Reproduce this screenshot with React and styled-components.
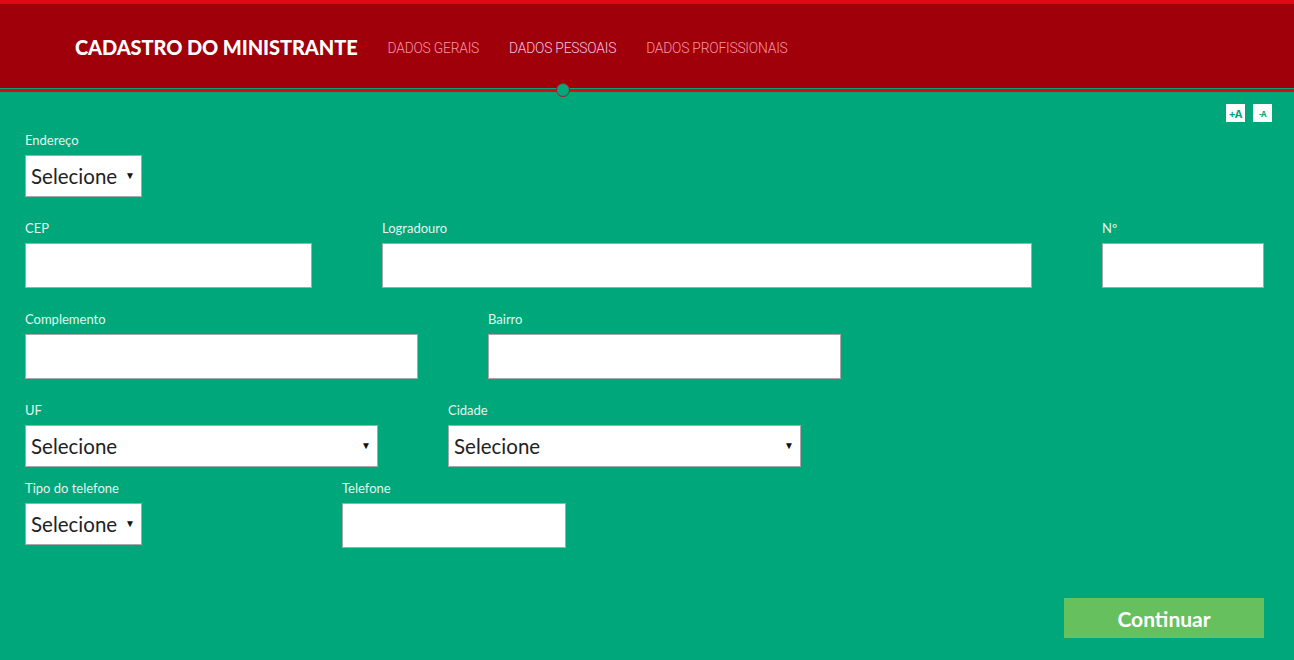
import React from "react";
import styled, { createGlobalStyle } from "styled-components";

const Global = createGlobalStyle`
  html, body { margin: 0; padding: 0; }
  body {
    background: #00a77a;
    font-family: Lato, "Open Sans", sans-serif;
    min-height: 100vh;
  }
  * { box-sizing: border-box; }
`;

const Header = styled.header`
  background: #a0000a;
  border-top: 4px solid #e30613;
  height: 88px;
  display: flex;
  align-items: stretch;
  padding-left: 75px;
  gap: 30px;
`;

const Title = styled.h1`
  margin: 0;
  align-self: center;
  margin-top: 1px;
  color: #fff;
  font-family: Lato, sans-serif;
  font-weight: 900;
  font-size: 20px;
  letter-spacing: -0.1px;
`;

const Nav = styled.nav`
  display: flex;
  gap: 30px;
  align-items: stretch;
`;

const NavItem = styled.a`
  position: relative;
  display: flex;
  align-items: center;
  padding-top: 4px;
  font-family: Roboto, sans-serif;
  font-weight: 300;
  font-size: 13.8px;
  letter-spacing: -0.2px;
  color: ${(p) => (p.$active ? "#f7c2e6" : "#f898a8")};
  text-decoration: none;
`;

const Dot = styled.span`
  position: absolute;
  left: 50%;
  bottom: -9px;
  width: 14px;
  height: 14px;
  margin-left: -7px;
  border-radius: 50%;
  background: #00a77a;
  border: 1px solid #c0101c;
  z-index: 2;
`;

const Rule = styled.div`
  height: 3px;
  margin-top: 1px;
  background: #e30613;
`;

const Main = styled.main`
  padding: 0 30px 0 25px;
`;

const SizeBar = styled.div`
  display: flex;
  justify-content: flex-end;
  gap: 8px;
  padding-top: 12px;
  margin-right: -8px;
`;

const SizeButton = styled.button`
  width: 19px;
  height: 18px;
  border: none;
  padding: 0;
  background: #fff;
  color: #00a77a;
  font-family: "Open Sans", sans-serif;
  font-weight: 700;
  font-size: ${(p) => p.$size}px;
  letter-spacing: -0.5px;
  display: flex;
  align-items: center;
  justify-content: center;
`;

const Row = styled.div`
  display: flex;
  gap: ${(p) => p.$gap}px;
  margin-top: ${(p) => p.$mt}px;
`;

const Field = styled.div`
  display: flex;
  flex-direction: column;
  width: ${(p) => p.$w}px;
`;

const Label = styled.label`
  color: #e4f4ed;
  font-size: 13px;
  line-height: 18px;
  height: 18px;
  margin-bottom: 6px;
`;

const Input = styled.input`
  width: 100%;
  height: 45px;
  border: 1px solid #a8a8a8;
  background: #fff;
  font-family: Lato, sans-serif;
  font-size: 18px;
  padding: 0 6px;
  outline: none;
`;

const SelectWrap = styled.div`
  position: relative;
  width: 100%;
  height: 42px;
`;

const Select = styled.select`
  appearance: none;
  -webkit-appearance: none;
  width: 100%;
  height: 100%;
  border: 1px solid #a8a8a8;
  border-radius: 0;
  background: #fff;
  color: #222;
  font-family: Lato, sans-serif;
  font-size: 20.5px;
  padding: 0 20px 0 5px;
  outline: none;
`;

const Caret = styled.span`
  position: absolute;
  right: 7px;
  top: 50%;
  transform: translateY(-58%);
  font-size: 10px;
  color: #111;
  pointer-events: none;
`;

const Footer = styled.div`
  display: flex;
  justify-content: flex-end;
  margin-top: 50px;
`;

const Continue = styled.button`
  width: 200px;
  height: 40px;
  border: none;
  background: #66c05e;
  color: #fff;
  font-family: Lato, sans-serif;
  font-weight: 700;
  font-size: 21px;
`;

function SelectField({ label, w }) {
  return (
    <Field $w={w}>
      <Label>{label}</Label>
      <SelectWrap>
        <Select defaultValue="">
          <option value="">Selecione</option>
        </Select>
        <Caret>▼</Caret>
      </SelectWrap>
    </Field>
  );
}

function TextField({ label, w }) {
  return (
    <Field $w={w}>
      <Label>{label}</Label>
      <Input type="text" />
    </Field>
  );
}

export default function App() {
  return (
    <>
      <Global />
      <Header>
        <Title>CADASTRO DO MINISTRANTE</Title>
        <Nav>
          <NavItem href="#">DADOS GERAIS</NavItem>
          <NavItem href="#" $active>
            DADOS PESSOAIS
            <Dot />
          </NavItem>
          <NavItem href="#">DADOS PROFISSIONAIS</NavItem>
        </Nav>
      </Header>
      <Rule />
      <Main>
        <SizeBar>
          <SizeButton $size={11}>+A</SizeButton>
          <SizeButton $size={8}>-A</SizeButton>
        </SizeBar>
        <Row $gap={0} $mt={9}>
          <SelectField label="Endereço" w={117} />
        </Row>
        <Row $gap={70} $mt={22}>
          <TextField label="CEP" w={287} />
          <TextField label="Logradouro" w={650} />
          <TextField label="Nº" w={162} />
        </Row>
        <Row $gap={70} $mt={22}>
          <TextField label="Complemento" w={393} />
          <TextField label="Bairro" w={353} />
        </Row>
        <Row $gap={70} $mt={22}>
          <SelectField label="UF" w={353} />
          <SelectField label="Cidade" w={353} />
        </Row>
        <Row $gap={200} $mt={12}>
          <SelectField label="Tipo do telefone" w={117} />
          <TextField label="Telefone" w={224} />
        </Row>
        <Footer>
          <Continue>Continuar</Continue>
        </Footer>
      </Main>
    </>
  );
}
